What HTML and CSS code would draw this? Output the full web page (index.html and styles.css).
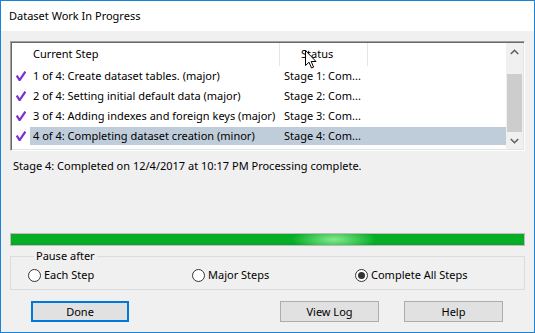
FILE: index.html
```html
<!DOCTYPE html>
<html lang="en">
  <head>
    <meta charset="utf-8" />
    <title>Dataset Work In Progress</title>
    <link rel="stylesheet" href="styles.css">
  </head>
  <body>
    <div class="dlg-window">
      <div class="dlg-titlebar">Dataset Work In Progress</div>
      <div class="dlg-content">
        <div class="step-list">
          <div class="step-list-main">
            <div class="step-header">
              <span class="col-step">Current Step</span>
              <span class="col-status">Status</span>
              <span class="col-rest"></span>
              <!-- mouse pointer sitting over the Status header -->
              <svg class="cursor" width="12" height="19" viewBox="0 0 12 19">
                <path d="M0.5 0.5 L0.5 15.5 L4 12.2 L6.5 18 L8.6 17.1 L6.2 11.5 L11 11.5 Z" fill="#fff" stroke="#000" stroke-width="1"/>
              </svg>
            </div>
            <div class="step-row">
              <span class="check"><svg width="10" height="10" viewBox="0 0 10 10"><path d="M0.8 4.6 L3.6 9.2 L9.4 0.6" fill="none" stroke="#7b2fd4" stroke-width="2.2" stroke-linejoin="round"/></svg></span>
              <div class="step-cells">
                <span class="col-step">1 of 4: Create dataset tables. (major)</span>
                <span class="col-status">Stage 1: Com...</span>
              </div>
            </div>
            <div class="step-row">
              <span class="check"><svg width="10" height="10" viewBox="0 0 10 10"><path d="M0.8 4.6 L3.6 9.2 L9.4 0.6" fill="none" stroke="#7b2fd4" stroke-width="2.2" stroke-linejoin="round"/></svg></span>
              <div class="step-cells">
                <span class="col-step">2 of 4: Setting initial default data (major)</span>
                <span class="col-status">Stage 2: Com...</span>
              </div>
            </div>
            <div class="step-row">
              <span class="check"><svg width="10" height="10" viewBox="0 0 10 10"><path d="M0.8 4.6 L3.6 9.2 L9.4 0.6" fill="none" stroke="#7b2fd4" stroke-width="2.2" stroke-linejoin="round"/></svg></span>
              <div class="step-cells">
                <span class="col-step">3 of 4: Adding indexes and foreign keys (major)</span>
                <span class="col-status">Stage 3: Com...</span>
              </div>
            </div>
            <div class="step-row selected">
              <span class="check"><svg width="10" height="10" viewBox="0 0 10 10"><path d="M0.8 4.6 L3.6 9.2 L9.4 0.6" fill="none" stroke="#7b2fd4" stroke-width="2.2" stroke-linejoin="round"/></svg></span>
              <div class="step-cells">
                <span class="col-step">4 of 4: Completing dataset creation (minor)</span>
                <span class="col-status">Stage 4: Com...</span>
              </div>
            </div>
          </div>
          <div class="scrollbar">
            <span class="scroll-btn"><svg width="9" height="6" viewBox="0 0 9 6"><path d="M0.8 5 L4.5 1.3 L8.2 5" fill="none" stroke="#606060" stroke-width="1.6"/></svg></span>
            <span class="scroll-track"><span class="scroll-thumb"></span></span>
            <span class="scroll-btn"><svg width="9" height="6" viewBox="0 0 9 6"><path d="M0.8 1 L4.5 4.7 L8.2 1" fill="none" stroke="#606060" stroke-width="1.6"/></svg></span>
          </div>
        </div>

        <p class="status-line">Stage 4: Completed on 12/4/2017 at 10:17 PM Processing complete.</p>

        <div class="progress"><div class="progress-fill"></div></div>

        <fieldset class="pause-group">
          <legend>Pause after</legend>
          <div class="radio-row">
            <label class="radio"><span class="radio-dot"></span>Each Step</label>
            <label class="radio"><span class="radio-dot"></span>Major Steps</label>
            <label class="radio"><span class="radio-dot checked"></span>Complete All Steps</label>
          </div>
        </fieldset>

        <div class="button-row">
          <button class="dlg-btn default">Done</button>
          <button class="dlg-btn">View Log</button>
          <button class="dlg-btn">Help</button>
        </div>
      </div>
    </div>
  </body>
</html>
```

FILE: styles.css
```css
* {
  box-sizing: border-box;
}

body {
  margin: 0;
  font-family: "Noto Sans", "Open Sans", sans-serif;
  font-size: 11px;
  color: #000;
  background: #f0f0f0;
}

.dlg-window {
  width: 535px;
  height: 333px;
  border: 1px solid #1883d7;
  display: flex;
  flex-direction: column;
  background: #f0f0f0;
}

.dlg-titlebar {
  height: 30px;
  background: #fff;
  padding: 7px 0 0 8px;
  line-height: 16px;
}

.dlg-content {
  padding: 10px 9px 0 9px;
}

/* list view */
.step-list {
  height: 110px;
  display: flex;
  background: #fff;
  border-top: 1px solid #a0a0a0;
  border-left: 1px solid #a0a0a0;
  border-right: 1px solid #fff;
  border-bottom: 1px solid #fff;
  box-shadow: inset 1px 1px 0 #696969, inset -1px -1px 0 #e3e3e3;
  padding: 1px;
}

.step-list-main {
  flex: 1;
}

.step-header {
  position: relative;
  height: 23px;
  display: flex;
  line-height: 21px;
}

.step-header .col-step {
  width: 268px;
  padding-left: 21px;
  border-right: 1px solid #e5e5e5;
}

.step-header .col-status {
  width: 88px;
  padding-left: 21px;
  border-right: 1px solid #e5e5e5;
}

.cursor {
  position: absolute;
  left: 293px;
  top: 7px;
}

.step-row {
  height: 20px;
  display: flex;
  align-items: center;
}

.check {
  width: 18px;
  padding-left: 4px;
  display: flex;
  align-items: center;
}

.step-cells {
  flex: 1;
  height: 18px;
  display: flex;
  line-height: 18px;
}

.step-row.selected .step-cells {
  background: #bfcddb;
}

.step-cells .col-step {
  width: 250px;
  padding-left: 3px;
  white-space: nowrap;
}

.step-cells .col-status {
  padding-left: 4px;
}

/* vertical scrollbar */
.scrollbar {
  width: 17px;
  display: flex;
  flex-direction: column;
  background: #f0f0f0;
}

.scroll-btn {
  height: 17px;
  display: flex;
  align-items: center;
  justify-content: center;
}

.scroll-track {
  flex: 1;
  padding: 14px 1px 0 1px;
}

.scroll-thumb {
  display: block;
  height: 58px;
  background: #cdcdcd;
}

.status-line {
  margin: 7px 0 0 3px;
  line-height: 16px;
}

/* progress bar */
.progress {
  margin-top: 59px;
  height: 13px;
  border: 1px solid #bcbcbc;
  background: #e6e6e6;
}

.progress-fill {
  height: 100%;
  background:
    radial-gradient(ellipse 42px 12px at 323px 50%, rgba(140, 236, 150, 0.95), rgba(140, 236, 150, 0) 100%),
    linear-gradient(#0aa92a, #06b025 40%, #06b025 70%, #0ba12b);
}

/* group box */
.pause-group {
  margin: 2px 0 0 0;
  padding: 3px 0 6px 17px;
  border: 1px solid #dcdcdc;
  min-width: 0;
}

.pause-group legend {
  margin-left: 6px;
  padding: 0 2px;
  line-height: 16px;
}

.radio-row {
  display: grid;
  grid-template-columns: 164px 163px auto;
}

.radio {
  display: flex;
  align-items: center;
  gap: 3px;
  line-height: 16px;
}

.radio-dot {
  width: 13px;
  height: 13px;
  border: 1px solid #333;
  border-radius: 50%;
  background: #fff;
  display: flex;
  align-items: center;
  justify-content: center;
}

.radio-dot.checked::after {
  content: "";
  width: 7px;
  height: 7px;
  border-radius: 50%;
  background: #333;
}

/* buttons */
.button-row {
  margin-top: 11px;
  display: flex;
  padding-left: 21px;
}

.dlg-btn {
  width: 99px;
  height: 21px;
  font: inherit;
  background: #e1e1e1;
  border: 1px solid #adadad;
  padding: 0;
  line-height: 18px;
}

.dlg-btn.default {
  width: 98px;
  border: 2px solid #0078d7;
  margin-right: 151px;
}

.dlg-btn:last-child {
  margin-left: 25px;
}
```
